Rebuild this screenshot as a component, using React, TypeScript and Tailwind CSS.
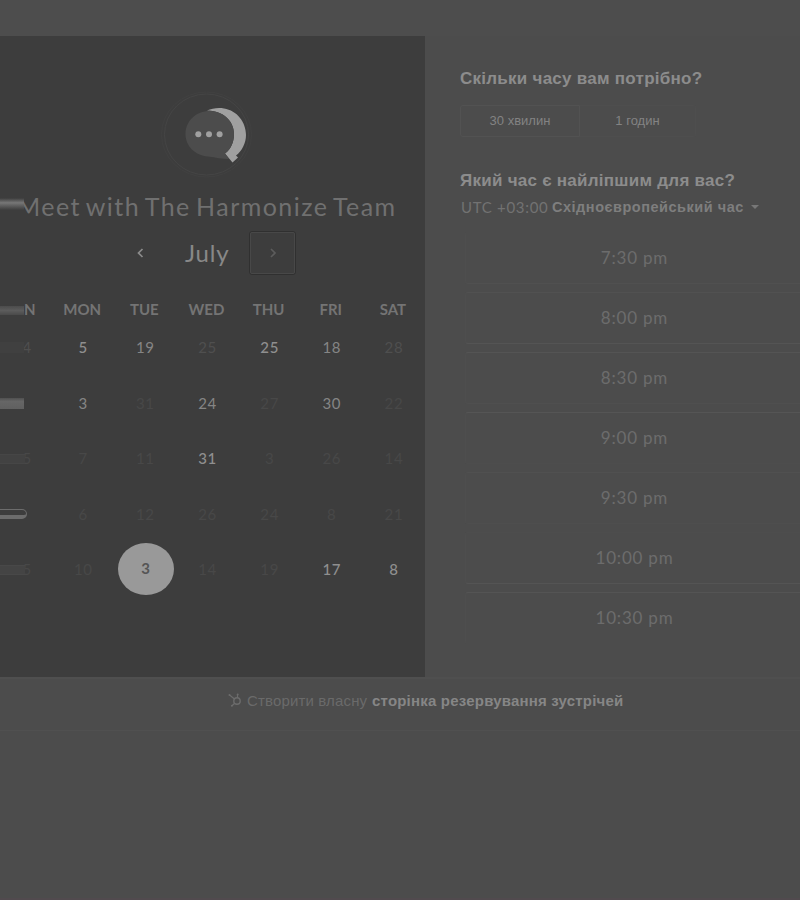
import React from "react";

type Tone = "bright" | "strong" | "dim" | "faint" | "picked";
type Day = [label: string, tone: Tone];

const WEEKDAYS = ["SUN", "MON", "TUE", "WED", "THU", "FRI", "SAT"];

const WEEKS: Day[][] = [
  [["4", "dim"], ["5", "strong"], ["19", "bright"], ["25", "dim"], ["25", "strong"], ["18", "bright"], ["28", "dim"]],
  [["", "dim"], ["3", "bright"], ["31", "faint"], ["24", "bright"], ["27", "faint"], ["30", "bright"], ["22", "faint"]],
  [["5", "faint"], ["7", "faint"], ["11", "faint"], ["31", "strong"], ["3", "faint"], ["26", "faint"], ["14", "faint"]],
  [["", "faint"], ["6", "faint"], ["12", "faint"], ["26", "faint"], ["24", "faint"], ["8", "faint"], ["21", "faint"]],
  [["5", "faint"], ["10", "faint"], ["3", "picked"], ["14", "faint"], ["19", "faint"], ["17", "strong"], ["8", "strong"]],
];

const TONES: Record<Tone, string> = {
  bright: "text-[#858585]",
  strong: "text-[#8f8f8f] font-medium",
  dim: "text-[#4f4f4f]",
  faint: "text-[#484848]",
  picked: "text-[#555555] font-bold",
};

// Each slot carries the shades of its top and bottom borders.
const SLOTS: [string, string][] = [
  ["7:30 pm", "border-t-transparent border-b-[#505050]"],
  ["8:00 pm", "border-t-[#515151] border-b-[#545454]"],
  ["8:30 pm", "border-t-[#545454] border-b-[#4f4f4f]"],
  ["9:00 pm", "border-t-[#555555] border-b-[#4d4d4d]"],
  ["9:30 pm", "border-t-[#505050] border-b-[#4e4e4e]"],
  ["10:00 pm", "border-t-[#4d4d4d] border-b-[#545454]"],
  ["10:30 pm", "border-t-[#545454] border-b-transparent"],
];

function Logo() {
  return (
    <svg width="100" height="92" viewBox="157 88 100 92" className="block">
      <ellipse cx="206.500" cy="134.500" rx="42" ry="40.500" fill="none" stroke="#454545" strokeWidth="1" />
      <ellipse cx="206.500" cy="134.500" rx="45" ry="42.500" fill="none" stroke="#414141" strokeWidth="1" />
      <path
        d="M207 110.500C212 108.500 218 107.500 224 108.500C237 110.500 246 122 246 135C246 143 242 151 236 155.500L238 157.500L232.500 162.500L225 153.500C231 149 234 142 234 134C234 120 222 110.500 207 110.500Z"
        fill="#a0a0a0"
      />
      <path
        d="M209.500 111C223 111 234 121 234 134C234 142 231 149 225 153.500L229 159C222 159 216 157.500 208 156.500C195 155.500 185.500 146 185.500 134C185.500 121 196 111 209.500 111Z"
        fill="#4c4c4c"
      />
      <circle cx="198.300" cy="134.200" r="3" fill="#a0a0a0" />
      <circle cx="209" cy="134.200" r="3" fill="#a0a0a0" />
      <circle cx="219.600" cy="134.200" r="3" fill="#a0a0a0" />
    </svg>
  );
}

function Sprocket() {
  return (
    <svg width="14" height="14" viewBox="0 0 14 14" fill="none" stroke="#6c6c6c" className="shrink-0">
      <circle cx="9" cy="8" r="3.200" strokeWidth="1.400" />
      <path d="M1.500 2L6.500 6M9.500 4.800V1.500M6.700 10.300L4 12.800" strokeWidth="1.200" />
      <circle cx="1.500" cy="2" r="1" fill="#6c6c6c" stroke="none" />
      <circle cx="9.700" cy="1.600" r="1" fill="#6c6c6c" stroke="none" />
      <circle cx="3.900" cy="12.700" r="1" fill="#6c6c6c" stroke="none" />
    </svg>
  );
}

function Chevron({ d, color }: { d: string; color: string }) {
  return (
    <svg width="8" height="12" viewBox="0 0 8 12" fill="none" stroke={color} strokeWidth="1.700">
      <path d={d} />
    </svg>
  );
}

/** Streaks running in from the left edge, over the first column. */
function EdgeStreaks() {
  return (
    <>
      <div className="absolute left-0 top-[160px] h-[24px] w-[24px] bg-[#3d3d3d] pt-[2px]">
        <div className="h-[12px] w-full bg-linear-to-b from-[#3d3d3d] via-[#777777] via-40% to-[#3d3d3d]" />
      </div>
      <div className="absolute left-0 top-[264px] flex h-[20px] w-[24px] items-center bg-[#3d3d3d]">
        <div className="h-[9px] w-full bg-linear-to-b from-[#4c4c4c] via-[#5c5c5c] to-[#4a4a4a]" />
      </div>
      <div className="absolute left-0 top-[306px] h-[11px] w-[24px] bg-[#404040]" />
      <div className="absolute left-0 top-[362px] h-[11px] w-[24px] bg-linear-to-b from-[#505050] via-[#666666] via-30% to-[#606060]" />
      <div className="absolute left-0 top-[418px] h-[10px] w-[25px] border-y border-[#464646] bg-[#424242]" />
      <div className="absolute -left-1 top-[473px] h-[10px] w-[31px] rounded-r-[5px] border border-b-[4px] border-[#6c6c6c]" />
      <div className="absolute left-0 top-[529px] h-[10px] w-[25px] border-y border-[#484848] bg-[#444444]" />
    </>
  );
}

function CalendarPanel() {
  return (
    <section className="relative flex h-[641px] w-[425px] shrink-0 flex-col overflow-hidden bg-[#3d3d3d] font-['Lato',sans-serif]">
      <div className="pl-[157px] pt-[52px]">
        <Logo />
      </div>
      <h1 className="mt-[10px] h-[32px] whitespace-nowrap pl-[17px] text-[25px] leading-[32px] tracking-[1.45px] [word-spacing:-2.5px] text-[#707070]">
        Meet with The Harmonize Team
      </h1>
      <div className="mt-[8px] flex h-[45px] items-center">
        <div className="ml-[136px] flex w-[49px]">
          <Chevron d="M6.500 2L2.500 6L6.500 10" color="#8b8b8b" />
        </div>
        <div className="w-[64px] text-[24px] leading-[32px] tracking-[0.8px] text-[#888888]">July</div>
        <div className="flex h-[44px] w-[47px] items-center justify-center rounded-[3px] border border-[#303030] outline outline-1 -outline-offset-2 outline-[#484848]">
          <Chevron d="M2 2L6 6L2 10" color="#5c5c5c" />
        </div>
      </div>
      <div className="-ml-[11px] mt-[23px] grid h-[20px] w-[435px] grid-cols-7 items-center text-center text-[15px] font-bold text-[#747474]">
        {WEEKDAYS.map((name) => (
          <span key={name}>{name}</span>
        ))}
      </div>
      <div className="-ml-[11px] mt-px w-[435px]">
        {WEEKS.map((week, row) => (
          <div key={row} className="grid h-[55.6px] grid-cols-7 text-center text-[15px] leading-[56px] tracking-[0.6px]">
            {week.map(([label, tone], col) =>
              tone === "picked" ? (
                <div key={col} className="flex justify-center pl-[3px]">
                  <span className={`mt-[2px] h-[52px] w-[56px] shrink-0 rounded-[50%] bg-[#999999] leading-[51px] ${TONES[tone]}`}>
                    {label}
                  </span>
                </div>
              ) : (
                <span key={col} className={`${TONES[tone]} ${col === 0 ? "pl-[14px]" : "pl-[2px]"}`}>
                  {label}
                </span>
              ),
            )}
          </div>
        ))}
      </div>
      <EdgeStreaks />
    </section>
  );
}

function TimePanel() {
  return (
    <section className="min-w-0 flex-1 overflow-hidden pl-[35px] font-['Liberation_Sans',Arial,sans-serif]">
      <h2 className="mt-[31px] h-[24px] whitespace-nowrap text-[17px] font-bold leading-[24px] tracking-[0.26px] text-[#8c8c8c]">
        Скільки часу вам потрібно?
      </h2>
      <div className="mt-[14px] flex h-[32px] w-[236px] text-center text-[13px] leading-[30px] text-[#838383]">
        <div className="w-[120px] rounded-l-[3px] border border-[#525252]">30 хвилин</div>
        <div className="flex-1 rounded-r-[3px] border border-l-0 border-[#4e4e4e]">1 годин</div>
      </div>
      <h2 className="mt-[32px] h-[24px] whitespace-nowrap text-[17px] font-bold leading-[24px] tracking-[0.26px] text-[#8c8c8c]">
        Який час є найліпшим для вас?
      </h2>
      <div className="mt-[3px] flex h-[22px] items-center whitespace-nowrap pl-px text-[#7e7e7e]">
        <span className="w-[91px] font-['Lato',sans-serif] text-[15px] tracking-[0.7px] text-[#727272]">UTC +03:00</span>
        <span className="w-[199px] pt-[2px] text-[14.5px] font-bold tracking-[0.52px]">Східноєвропейський час</span>
        <span className="h-0 w-0 border-x-4 border-t-4 border-x-transparent border-t-[#777777]" />
      </div>
      <div className="mt-[14px] flex flex-col gap-[8px] pl-[5px]">
        {SLOTS.map(([time, edges]) => (
          <div
            key={time}
            className={`h-[52px] rounded-l-[3px] border-y border-l border-l-[#4e4e4e] pl-[3px] text-center font-['Lato',sans-serif] text-[17px] leading-[50px] tracking-[0.8px] text-[#6c6c6c] ${edges}`}
          >
            {time}
          </div>
        ))}
      </div>
    </section>
  );
}

export default function App() {
  return (
    <div className="flex h-[900px] w-[800px] flex-col overflow-hidden border-b-2 border-[#514a4e] bg-[#4c4c4c]">
      <header className="h-[36px] shrink-0 bg-[#4d4d4d]" />
      <main className="flex h-[641px] shrink-0">
        <CalendarPanel />
        <TimePanel />
      </main>
      <footer className="flex h-[54px] shrink-0 border-b border-t-2 border-b-[#505050] border-t-[#4f4f4f] pl-[228px] pt-[11px] font-['Liberation_Sans',Arial,sans-serif] text-[15px] leading-[22px]">
        <div className="mt-[3px] mr-[5px]">
          <Sprocket />
        </div>
        <span className="w-[125px] whitespace-nowrap tracking-[0.15px] text-[#6a6a6a]">Створити власну</span>
        <span className="whitespace-nowrap font-bold tracking-[0.2px] text-[#868686]">сторінка резервування зустрічей</span>
      </footer>
    </div>
  );
}
